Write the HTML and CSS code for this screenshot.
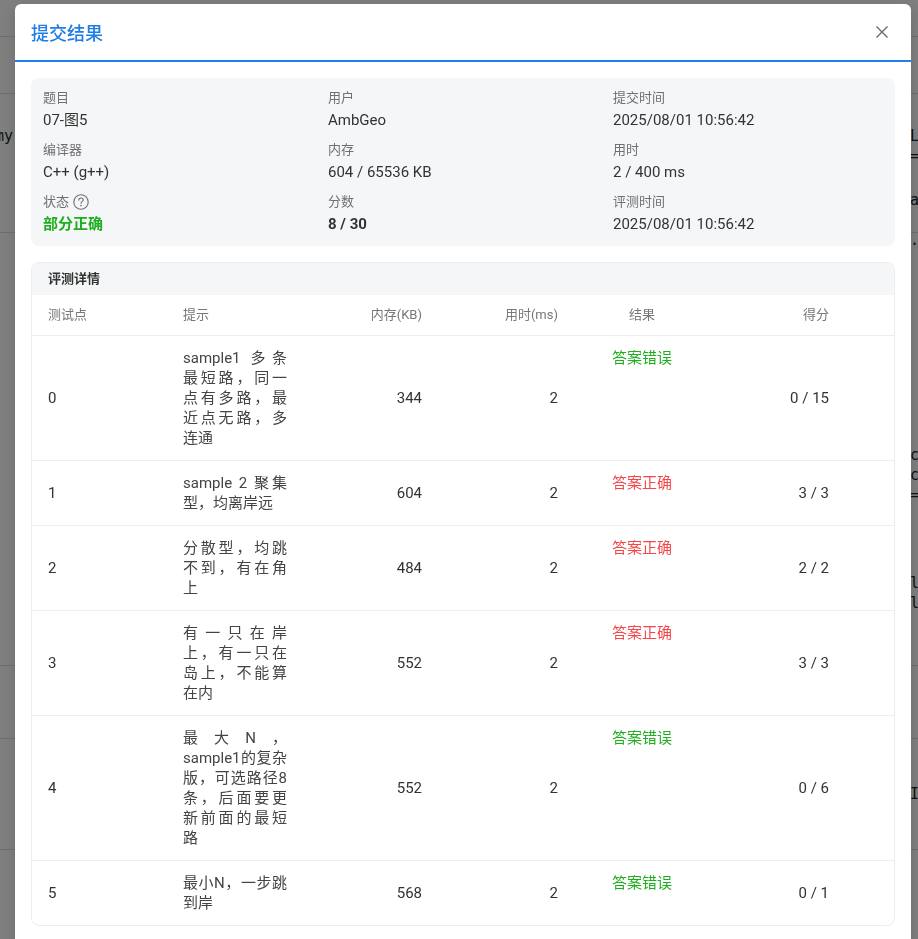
FILE: index.html
```html
<!DOCTYPE html>
<html lang="zh-CN">
<head>
<meta charset="utf-8">
<title>提交结果</title>
<link rel="stylesheet" href="styles.css">
</head>
<body>
<div class="page">
  <div class="bg-top"></div>
  <div class="bg-bar"></div>
  <div class="bg-sec">
    <div class="bg-line"><span class="bg-l">Dummy :</span><span class="bg-r">Li</span></div>
    <div class="bg-line"><span class="bg-l"></span><span class="bg-r">=主</span></div>
    <div class="bg-line bg-gap"><span class="bg-l"></span><span class="bg-r">at</span></div>
    <div class="bg-line"><span class="bg-l"></span><span class="bg-r">&nbsp;0</span></div>
    <div class="bg-line"><span class="bg-l"></span><span class="bg-r">.I</span></div>
  </div>
  <div class="bg-sec2">
    <div class="bg-line"><span class="bg-l"></span><span class="bg-r">cc</span></div>
    <div class="bg-line"><span class="bg-l"></span><span class="bg-r">cH</span></div>
    <div class="bg-line"><span class="bg-l"></span><span class="bg-r">=主</span></div>
    <div class="bg-line bg-gap"><span class="bg-l"></span><span class="bg-r">&nbsp;主</span></div>
    <div class="bg-line bg-gap"><span class="bg-l"></span><span class="bg-r">le</span></div>
    <div class="bg-line"><span class="bg-l"></span><span class="bg-r">le</span></div>
  </div>
  <div class="bg-row2"></div>
  <div class="bg-row3"><span class="bg-r">II</span></div>
</div>
<div class="mask"></div>

<div class="modal">
  <div class="modal-header">
    <h2 class="modal-title">提交结果</h2>
    <button class="close" aria-label="关闭">
      <svg width="14" height="14" viewBox="0 0 14 14"><path d="M1.5 1.5 L12.5 12.5 M12.5 1.5 L1.5 12.5" stroke="#666" stroke-width="1.3" fill="none"/></svg>
    </button>
  </div>
  <div class="modal-body">
    <div class="info">
      <div class="item"><div class="label">题目</div><div class="value">07-图5</div></div>
      <div class="item"><div class="label">用户</div><div class="value">AmbGeo</div></div>
      <div class="item"><div class="label">提交时间</div><div class="value">2025/08/01 10:56:42</div></div>
      <div class="item"><div class="label">编译器</div><div class="value">C++ (g++)</div></div>
      <div class="item"><div class="label">内存</div><div class="value">604 / 65536 KB</div></div>
      <div class="item"><div class="label">用时</div><div class="value">2 / 400 ms</div></div>
      <div class="item"><div class="label">状态
        <svg class="help" width="16" height="16" viewBox="0 0 16 16"><circle cx="8" cy="8" r="7.2" stroke="#707070" stroke-width="1.1" fill="none"/><path d="M5.8 6.1 C5.8 4.8 6.8 4 8 4 C9.2 4 10.2 4.8 10.2 5.9 C10.2 7.3 8 7.6 8 9.3" stroke="#707070" stroke-width="1.1" fill="none" stroke-linecap="round"/><circle cx="8" cy="11.6" r="0.8" fill="#707070"/></svg>
      </div><div class="value partial">部分正确</div></div>
      <div class="item"><div class="label">分数</div><div class="value bold">8 / 30</div></div>
      <div class="item"><div class="label">评测时间</div><div class="value">2025/08/01 10:56:42</div></div>
    </div>

    <div class="judge">
      <div class="judge-head">评测详情</div>
      <table class="cases">
        <colgroup>
          <col class="c-id"><col class="c-hint"><col class="c-mem"><col class="c-time"><col class="c-res"><col class="c-score">
        </colgroup>
        <thead>
          <tr><th class="left">测试点</th><th class="left">提示</th><th class="right">内存(KB)</th><th class="right">用时(ms)</th><th class="center">结果</th><th class="right score">得分</th></tr>
        </thead>
        <tbody>
          <tr><td>0</td><td class="hint">sample1 多条最短路，同一点有多路，最近点无路，多连通</td><td class="right">344</td><td class="right">2</td><td class="center res wrong">答案错误</td><td class="right score">0 / 15</td></tr>
          <tr><td>1</td><td class="hint">sample 2 聚集型，均离岸远</td><td class="right">604</td><td class="right">2</td><td class="center res ok">答案正确</td><td class="right score">3 / 3</td></tr>
          <tr><td>2</td><td class="hint">分散型，均跳不到，有在角上</td><td class="right">484</td><td class="right">2</td><td class="center res ok">答案正确</td><td class="right score">2 / 2</td></tr>
          <tr><td>3</td><td class="hint">有一只在岸上，有一只在岛上，不能算在内</td><td class="right">552</td><td class="right">2</td><td class="center res ok">答案正确</td><td class="right score">3 / 3</td></tr>
          <tr><td>4</td><td class="hint">最大N，sample1的复杂版，可选路径8条，后面要更新前面的最短路</td><td class="right">552</td><td class="right">2</td><td class="center res wrong">答案错误</td><td class="right score">0 / 6</td></tr>
          <tr><td>5</td><td class="hint">最小N，一步跳到岸</td><td class="right">568</td><td class="right">2</td><td class="center res wrong">答案错误</td><td class="right score">0 / 1</td></tr>
        </tbody>
      </table>
    </div>
  </div>
</div>
</body>
</html>
```

FILE: styles.css
```css
html, body {
  margin: 0;
  padding: 0;
  height: 100%;
  overflow: hidden;
}
body {
  font-family: Roboto, "Noto Sans CJK SC", "Noto Sans", sans-serif;
  color: #333;
  background: #fff;
}

/* ---------- background page (dimmed) ---------- */
.page {
  display: flex;
  flex-direction: column;
  font-family: "DejaVu Sans Mono", "Noto Sans CJK SC", monospace;
  font-size: 15px;
  color: #222;
}
.bg-top {
  height: 36px;
  border-bottom: 1px solid #ddd;
}
.bg-bar {
  height: 56px;
  border-bottom: 1px solid #ddd;
}
.bg-sec {
  padding-top: 32px;
  height: 106px;
  border-bottom: 1px solid #ddd;
  display: flex;
  flex-direction: column;
}
.bg-sec2 {
  padding-top: 212px;
  height: 220px;
  border-bottom: 1px solid #ddd;
  display: flex;
  flex-direction: column;
}
.bg-line {
  display: flex;
  justify-content: space-between;
  line-height: 20px;
  height: 20px;
}
.bg-gap {
  margin-top: 24px;
}
.bg-l {
  margin-left: -32px;
}
.bg-r {
  width: 8px;
  overflow: hidden;
  white-space: nowrap;
}
.bg-row2 {
  height: 72px;
  border-bottom: 1px solid #ddd;
}
.bg-row3 {
  height: 110px;
  border-bottom: 1px solid #ddd;
  display: flex;
  justify-content: flex-end;
  align-items: center;
}
.mask {
  position: fixed;
  inset: 0;
  background: rgba(0, 0, 0, 0.5);
}

/* ---------- modal ---------- */
.modal {
  position: fixed;
  left: 15px;
  top: 4px;
  width: 896px;
  height: 1000px;
  background: #fff;
  border-radius: 6px;
  box-shadow: 0 4px 16px rgba(0, 0, 0, 0.15);
}
.modal-header {
  height: 56px;
  padding: 0 17px 0 16px;
  display: flex;
  align-items: center;
  justify-content: space-between;
  border-bottom: 2px solid #1e80e8;
}
.modal-title {
  margin: 0;
  font-size: 18px;
  font-weight: 500;
  color: #1f7de6;
}
.close {
  width: 24px;
  height: 24px;
  padding: 0;
  border: 0;
  background: transparent;
  display: flex;
  align-items: center;
  justify-content: center;
  cursor: pointer;
}
.modal-body {
  padding: 16px;
}

/* info card */
.info {
  background: #f5f6f8;
  border-radius: 8px;
  padding: 11px 12px 11px;
  display: grid;
  grid-template-columns: 285px 285px 1fr;
  row-gap: 10px;
}
.label {
  font-size: 13px;
  line-height: 18px;
  color: #707070;
  display: flex;
  align-items: center;
  gap: 4px;
}
.help {
  display: block;
}
.value {
  margin-top: 2px;
  font-size: 15px;
  line-height: 22px;
  color: #333;
}
.value.partial {
  color: #1fae1f;
  font-weight: 700;
}
.value.bold {
  font-weight: 700;
}

/* judge card */
.judge {
  margin-top: 16px;
  border: 1px solid #ebedf0;
  border-radius: 8px;
  overflow: hidden;
}
.judge-head {
  background: #f5f6f8;
  height: 32px;
  line-height: 32px;
  padding: 0 16px;
  font-size: 13px;
  font-weight: 700;
  color: #333;
}
.cases {
  width: 100%;
  border-collapse: collapse;
  table-layout: fixed;
}
.c-id { width: 135px; }
.c-hint { width: 136px; }
.c-mem { width: 135px; }
.c-time { width: 136px; }
.c-res { width: 136px; }
.c-score { width: auto; }
.cases th {
  font-size: 13px;
  font-weight: 400;
  color: #777;
  line-height: 20px;
  padding: 10px 16px;
  border-bottom: 1px solid #eee;
}
.cases td {
  font-size: 15px;
  line-height: 20px;
  color: #333;
  padding: 12px 16px;
  vertical-align: middle;
  border-top: 1px solid #eee;
}
.cases tbody tr:first-child td {
  border-top: 0;
}
.cases .left { text-align: left; }
.cases .right { text-align: right; }
.cases .center { text-align: center; }
.cases .score {
  padding-right: 65px;
}
.cases td.hint {
  text-align: justify;
  color: #444;
}
.cases td.res {
  vertical-align: top;
}
.wrong { color: #1fae1f !important; }
.ok { color: #f4474a !important; }
```
